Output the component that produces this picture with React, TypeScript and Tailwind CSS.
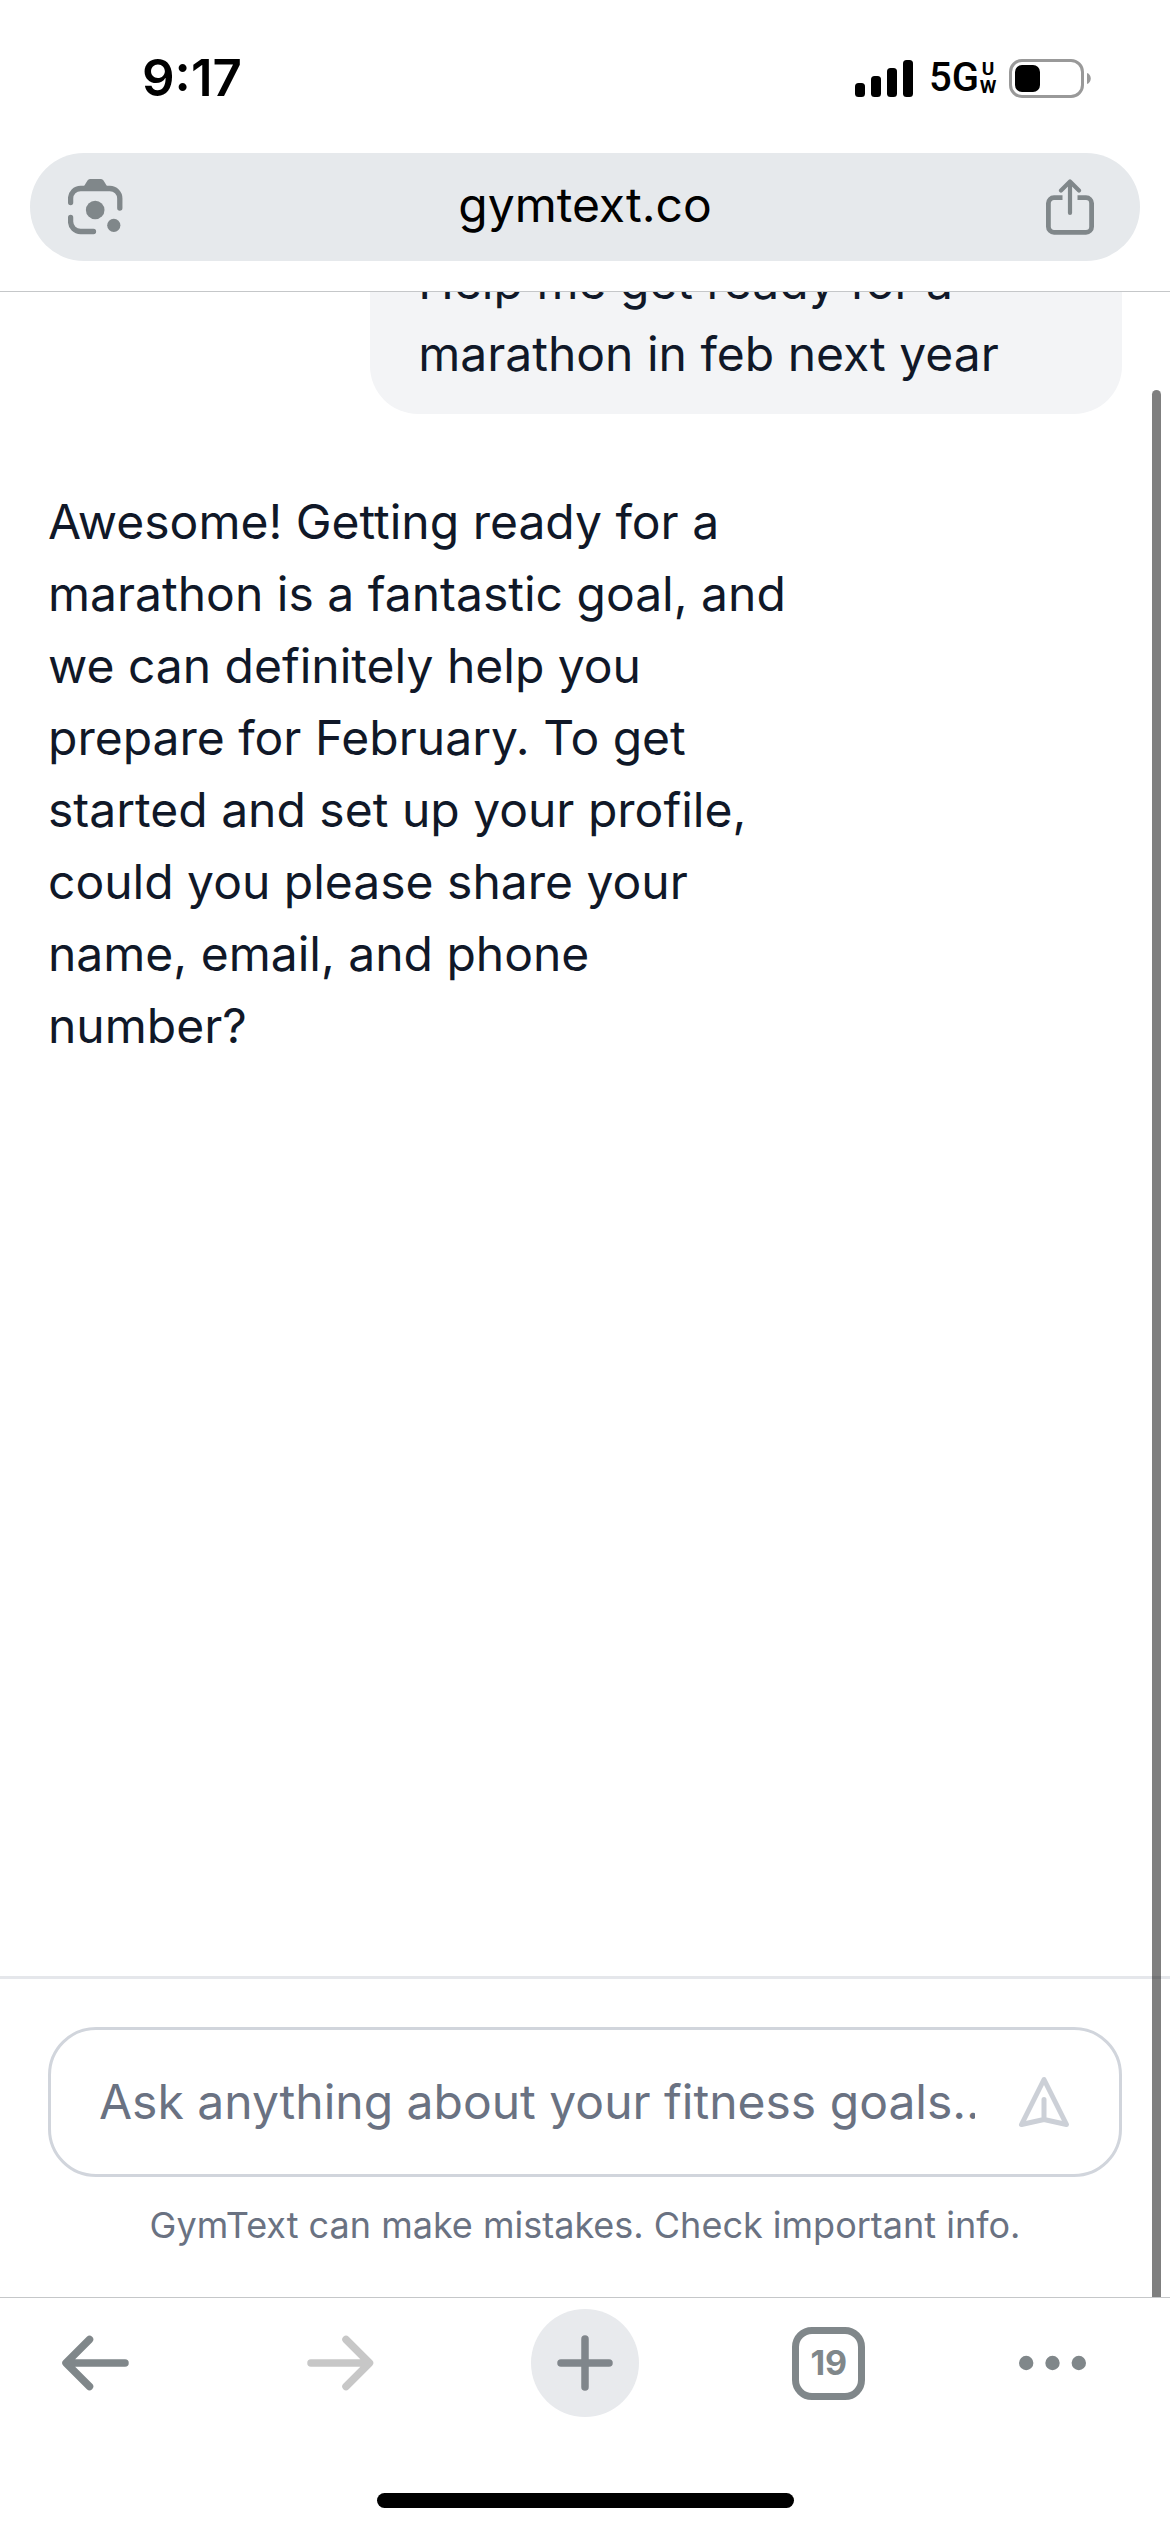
import React from "react";

const ICON = "#80878a";

function StatusBar() {
  return (
    <div className="flex items-center justify-between pt-[54px] pb-[51px] pl-[142px] pr-[79px]">
      <time className="text-[51px] leading-[48px] font-semibold text-black">9:17</time>
      <div className="flex h-12 items-center text-black">
        <svg className="mr-4 h-[37px] w-[58px]" viewBox="0 0 58 37" aria-label="Signal strength">
          <rect x="0" y="23" width="10" height="14" rx="3.5" />
          <rect x="16" y="16" width="10" height="21" rx="3.5" />
          <rect x="32" y="8" width="10" height="29" rx="3.5" />
          <rect x="48" y="0" width="10" height="37" rx="3.5" />
        </svg>
        <span className="font-[Roboto,sans-serif] text-[40px] leading-[48px] font-medium">5G</span>
        <span className="mr-3 flex w-[18px] flex-col items-center font-[Roboto,sans-serif] text-[19px] leading-[18px] font-bold">
          <span>U</span>
          <span>W</span>
        </span>
        <svg className="h-[39px] w-[82px]" viewBox="0 0 82 39" aria-label="Battery">
          <rect x="1.5" y="1.5" width="72" height="36" rx="11.5" fill="none" stroke="#999" strokeWidth="3" />
          <rect x="6" y="6" width="25" height="27" rx="7" />
          <path d="M78 14c5 1.600 5 9.400 0 11z" fill="#999" />
        </svg>
      </div>
    </div>
  );
}

function AddressBar() {
  return (
    <div className="mx-[30px] flex h-[108px] items-center justify-between rounded-full bg-[#e6e9ec] pl-[38px] pr-[46px]">
      <button type="button" aria-label="Search with camera">
        <svg className="size-14" viewBox="0 0 56 56" fill="none" stroke={ICON} strokeWidth="5.3" strokeLinecap="round">
          <path d="M2.600 23.500V19.500a10 10 0 0 1 10-10h29.200a10 10 0 0 1 10 10V29M2.600 38.500v4a10 10 0 0 0 10 10H25.500" />
          <path d="M15.500 8l4-6.500q.8-1.500 2.500-1.500h11q1.700 0 2.500 1.500l4 6.500z" fill={ICON} stroke="none" />
          <circle cx="27.200" cy="31" r="9.300" fill={ICON} stroke="none" />
          <circle cx="45.800" cy="46.300" r="6.600" fill={ICON} stroke="none" />
        </svg>
      </button>
      <span className="pb-1 text-[48px] leading-[72px] text-black">gymtext.co</span>
      <button type="button" aria-label="Share">
        <svg className="h-14 w-12" viewBox="0 0 48 56" fill="none" stroke={ICON} strokeWidth="4.800">
          <path d="M16.500 18.700H8a5.600 5.600 0 0 0-5.600 5.600V47.700A5.600 5.600 0 0 0 8 53.300H40a5.600 5.600 0 0 0 5.600-5.600V24.300A5.600 5.600 0 0 0 40 18.700H31.500" />
          <path d="M24 3.500V34M15 11.500L24 2.500L33 11.500" strokeLinecap="round" strokeLinejoin="round" strokeWidth="4.200" />
        </svg>
      </button>
    </div>
  );
}

function Composer() {
  return (
    <form className="border-t-[3px] border-gray-200 p-12" onSubmit={(e) => e.preventDefault()}>
      <div className="flex items-center rounded-[48px] border-[3px] border-gray-300 py-9 pr-[45px] pl-12">
        <input
          type="text"
          aria-label="Message"
          placeholder="Ask anything about your fitness goals..."
          className="h-[72px] min-w-0 flex-1 bg-transparent text-[48px] leading-[72px] text-[#101828] outline-none placeholder:text-[#6a7282]"
        />
        <button type="submit" aria-label="Send" className="ml-[39px] text-[#ccd0d7]">
          <svg className="size-[60px]" viewBox="0 0 24 24" fill="none" stroke="currentColor" strokeWidth="2" strokeLinecap="round" strokeLinejoin="round">
            <path d="M12 19l9 2-9-18-9 18 9-2zm0 0v-8" />
          </svg>
        </button>
      </div>
      <p className="mt-6 text-center text-[36px] leading-[48px] text-[#6a7282]">
        GymText can make mistakes. Check important info.
      </p>
    </form>
  );
}

function Toolbar() {
  const cell = "flex size-[108px] items-center justify-center rounded-full";
  return (
    <nav className="border-t border-[#c5c7c9] bg-white pt-[11px]" aria-label="Browser">
      <div className="flex items-center justify-between pl-[42px] pr-[84px]">
        <button type="button" aria-label="Back" className={cell}>
          <svg className="h-14 w-[68px]" viewBox="0 0 68 56" fill="none" stroke={ICON} strokeWidth="7.500" strokeLinecap="round" strokeLinejoin="round">
            <path d="M63 28H5M27.500 4.500L4 28L27.500 51.500" />
          </svg>
        </button>
        <button type="button" aria-label="Forward" className={cell} disabled>
          <svg className="h-14 w-[68px]" viewBox="0 0 68 56" fill="none" stroke="#c7c7c7" strokeWidth="7.500" strokeLinecap="round" strokeLinejoin="round">
            <path d="M5 28H63M40 4.500L63.500 28L40 51.500" />
          </svg>
        </button>
        <button type="button" aria-label="New tab" className={`${cell} bg-[#e8eaed]`}>
          <svg className="size-14" viewBox="0 0 56 56" fill="none" stroke="#80868b" strokeWidth="7.500" strokeLinecap="round">
            <path d="M4 28H52M28 4V52" />
          </svg>
        </button>
        <button type="button" aria-label="19 open tabs" className={cell}>
          <span className="flex size-[73px] items-center justify-center rounded-[20px] border-[7px] border-[#80878a] text-[34px] leading-none font-bold text-[#80878a]">
            19
          </span>
        </button>
        <button type="button" aria-label="More" className="flex h-[108px] w-[67px] items-center">
          <svg className="h-4 w-[67px]" viewBox="0 0 67 16" fill={ICON}>
            <circle cx="7.200" cy="8" r="7.200" />
            <circle cx="33.500" cy="8" r="7.200" />
            <circle cx="59.800" cy="8" r="7.200" />
          </svg>
        </button>
      </div>
      <div className="mx-auto mt-[76px] mb-6 h-[15px] w-[417px] rounded-full bg-black" />
    </nav>
  );
}

export default function App() {
  return (
    <div className="flex h-screen flex-col overflow-hidden bg-white font-[Inter,sans-serif] text-[#101828]">
      <header className="border-b border-[#c5c7c9] bg-white pb-[30px]">
        <StatusBar />
        <AddressBar />
      </header>
      <div className="relative flex min-h-0 flex-1 flex-col overflow-hidden">
        <main className="flex min-h-0 flex-1 flex-col justify-start overflow-hidden px-12">
          <div className="-mt-[70px] flex flex-col gap-12 text-[48px] leading-[72px]">
            <p className="w-[70%] self-end rounded-[48px] bg-gray-100 px-12 py-6">
              Help me get ready for a marathon in feb next year
            </p>
            <p className="w-[70%] py-6">
              Awesome! Getting ready for a marathon is a fantastic goal, and we can definitely help you prepare for
              February. To get started and set up your profile, could you please share your name, email, and phone
              number?
            </p>
          </div>
        </main>
        <Composer />
        <div className="absolute top-[98px] right-[9px] bottom-0 w-[9px] rounded-t-full bg-black/50" />
      </div>
      <Toolbar />
    </div>
  );
}
